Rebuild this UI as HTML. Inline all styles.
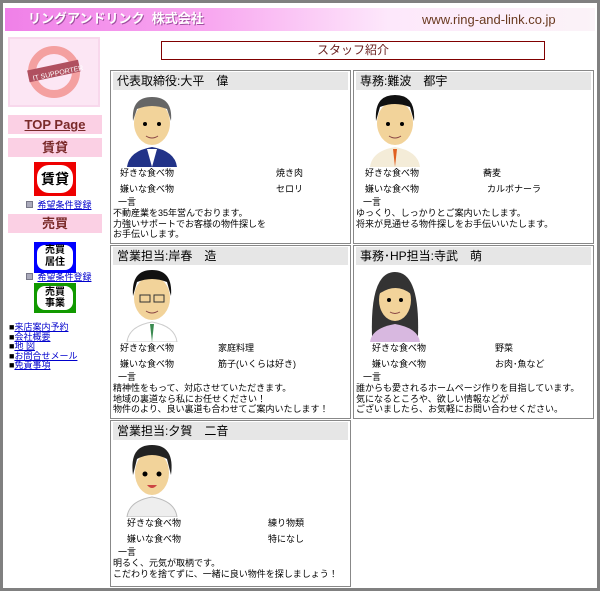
<!DOCTYPE html>
<html><head><meta charset="utf-8"><style>
*{margin:0;padding:0;box-sizing:border-box}
body{width:600px;height:591px;background:#fff;position:relative;overflow:hidden;font-family:"Liberation Sans","Noto Sans CJK JP",sans-serif;color:#000}
.a{position:absolute;white-space:nowrap}
#frame{position:absolute;left:0;top:0;width:600px;height:591px;border:3px solid #808080}
#hdr{left:5px;top:8px;width:590px;height:23px;background:linear-gradient(90deg,#f080e8 0%,#f8a8f0 35%,#fde8fb 65%,#fbf3f8 100%)}
.band{position:absolute;left:8px;width:94px;height:19px;background:#fbd0e4;color:#7a2a2a;font-weight:bold;text-align:center;font-size:13px;line-height:19px}
.card{position:absolute;border:1px solid #888;background:#fff;width:241px}
.card .h{position:absolute;left:2px;top:1px;right:2px;height:18px;background:#e6e6e6;font-size:12px;line-height:18px;padding-left:4px}
.s{font-size:9px;line-height:10px}
.t{font-size:9px;line-height:10.5px;left:2px}
.lk{color:#00c;text-decoration:underline;font-size:9px}
</style></head><body>
<div id="frame"></div>
<div class="a" id="hdr"></div>
<div class="a" style="left:28px;top:11px;font-size:13px;line-height:16px;color:#fff;font-weight:bold;text-shadow:1px 1px 0 #a050a0">リングアンドリンク&nbsp; 株式会社</div>
<div class="a" style="left:422px;top:12px;font-size:13px;line-height:16px;color:#6a3a20">www.ring-and-link.co.jp</div>

<div class="a" style="left:8px;top:37px;width:92px;height:70px;background:#fce6f4;border:2px solid #f8d8ec"></div>
<svg class="a" style="left:24px;top:45px" width="60" height="55"><circle cx="30" cy="27" r="22" fill="none" stroke="#f4a0a0" stroke-width="8"/><rect x="4" y="20" width="52" height="12" fill="#b05060" transform="rotate(-12 30 27)"/><text x="8" y="31" font-size="7" fill="#fff" transform="rotate(-12 30 27)" font-family="Liberation Sans">IT SUPPORTER</text></svg>

<div class="band" style="top:115px;text-decoration:underline">TOP Page</div>
<div class="band" style="top:138px">賃貸</div>
<div class="a" style="left:34px;top:162px;width:42px;height:34px;background:#e00;padding:3px"><div style="background:#fff;border-radius:12px;height:28px;text-align:center;font-weight:bold;font-size:14px;line-height:28px">賃貸</div></div>
<div class="a" style="left:26px;top:195px"><span style="display:inline-block;width:7px;height:7px;background:#aab;border:1px solid #778"></span> <span class="lk">希望条件登録</span></div>
<div class="band" style="top:214px">売買</div>
<div class="a" style="left:34px;top:242px;width:42px;height:31px;background:#00f;padding:3px"><div style="background:#fff;border-radius:8px;height:25px;text-align:center;font-weight:bold;font-size:10px;line-height:12px;padding-top:0px">売買<br>居住</div></div>
<div class="a" style="left:26px;top:271px;line-height:10px"><span style="display:inline-block;width:7px;height:7px;background:#aab;border:1px solid #778"></span> <span class="lk">希望条件登録</span></div>
<div class="a" style="left:34px;top:283px;width:42px;height:30px;background:#190;padding:3px"><div style="background:#fff;border-radius:8px;height:24px;text-align:center;font-weight:bold;font-size:10px;line-height:11px;padding-top:1px">売買<br>事業</div></div>
<div class="a" style="left:9px;top:323px;font-size:9px;line-height:9.5px">■<span class="lk">来店案内予約</span><br>■<span class="lk">会社概要</span><br>■<span class="lk">地 図</span><br>■<span class="lk">お問合せメール</span><br>■<span class="lk">免責事項</span></div>

<div class="a" style="left:161px;top:41px;width:384px;height:19px;border:1px solid #800000;text-align:center;font-size:12px;line-height:17px;color:#6a2020">スタッフ紹介</div>

<!-- card 1 -->
<div class="card" style="left:110px;top:70px;height:174px">
<div class="h">代表取締役:大平　偉</div>
<svg class="a" style="left:12px;top:20px" width="58" height="76"><path d="M4 76 Q6 60 29 56 Q52 60 54 76Z" fill="#223388"/><path d="M24 58 L29 76 L34 58Z" fill="#fff"/><ellipse cx="29" cy="32" rx="18" ry="22" fill="#f2d39a"/><path d="M10 30 Q8 6 29 6 Q50 6 48 30 L44 18 Q29 12 14 18Z" fill="#666"/><circle cx="22" cy="33" r="2"/><circle cx="36" cy="33" r="2"/><path d="M23 45 Q29 49 35 45" stroke="#844" fill="none"/></svg>
<div class="a s" style="left:9px;top:97px">好きな食べ物</div><div class="a s" style="left:165px;top:97px">焼き肉</div>
<div class="a s" style="left:9px;top:113px">嫌いな食べ物</div><div class="a s" style="left:165px;top:113px">セロリ</div>
<div class="a s" style="left:7px;top:126px">一言</div>
<div class="a t" style="top:137px">不動産業を35年営んでおります。<br>力強いサポートでお客様の物件探しを<br>お手伝いします。</div>
</div>
<!-- card 2 -->
<div class="card" style="left:353px;top:70px;height:174px">
<div class="h">専務:難波　都宇</div>
<svg class="a" style="left:12px;top:20px" width="58" height="76"><path d="M4 76 Q6 60 29 56 Q52 60 54 76Z" fill="#f4ecd8"/><path d="M27 58 L29 76 L31 58Z" fill="#e06020"/><ellipse cx="29" cy="32" rx="18" ry="22" fill="#f2d39a"/><path d="M10 30 Q8 4 29 4 Q50 4 48 30 L44 16 Q29 10 14 16Z" fill="#111"/><circle cx="22" cy="33" r="2"/><circle cx="36" cy="33" r="2"/><path d="M23 45 Q29 49 35 45" stroke="#844" fill="none"/></svg>
<div class="a s" style="left:11px;top:97px">好きな食べ物</div><div class="a s" style="left:129px;top:97px">蕎麦</div>
<div class="a s" style="left:11px;top:113px">嫌いな食べ物</div><div class="a s" style="left:133px;top:113px">カルボナーラ</div>
<div class="a s" style="left:9px;top:126px">一言</div>
<div class="a t" style="top:137px">ゆっくり、しっかりとご案内いたします。<br>将来が見通せる物件探しをお手伝いいたします。</div>
</div>
<!-- card 3 -->
<div class="card" style="left:110px;top:245px;height:174px">
<div class="h">営業担当:岸春　造</div>
<svg class="a" style="left:12px;top:20px" width="58" height="76"><path d="M4 76 Q6 60 29 56 Q52 60 54 76Z" fill="#fff" stroke="#ccc"/><path d="M27 58 L29 76 L31 58Z" fill="#3a8a50"/><ellipse cx="29" cy="32" rx="18" ry="22" fill="#f2d39a"/><path d="M10 30 Q8 4 29 4 Q50 4 48 30 L44 16 Q29 10 14 16Z" fill="#111"/><rect x="17" y="29" width="10" height="7" fill="none" stroke="#333"/><rect x="31" y="29" width="10" height="7" fill="none" stroke="#333"/><path d="M23 45 Q29 49 35 45" stroke="#844" fill="none"/></svg>
<div class="a s" style="left:9px;top:97px">好きな食べ物</div><div class="a s" style="left:107px;top:97px">家庭料理</div>
<div class="a s" style="left:9px;top:113px">嫌いな食べ物</div><div class="a s" style="left:107px;top:113px">筋子(いくらは好き)</div>
<div class="a s" style="left:7px;top:126px">一言</div>
<div class="a t" style="top:137px">精神性をもって、対応させていただきます。<br>地域の裏道なら私にお任せください！<br>物件のより、良い裏道も合わせてご案内いたします！</div>
</div>
<!-- card 4 -->
<div class="card" style="left:353px;top:245px;height:174px">
<div class="h">事務･HP担当:寺武　萌</div>
<svg class="a" style="left:12px;top:20px" width="58" height="76"><path d="M6 70 Q4 6 29 6 Q54 6 52 70Z" fill="#333"/><path d="M4 76 Q6 62 29 58 Q52 62 54 76Z" fill="#d8b8e0"/><ellipse cx="29" cy="34" rx="16" ry="21" fill="#f2d39a"/><path d="M13 28 Q18 10 29 10 Q42 10 45 28 Q30 16 13 28Z" fill="#333"/><circle cx="23" cy="34" r="2"/><circle cx="35" cy="34" r="2"/><path d="M24 46 Q29 49 34 46" stroke="#844" fill="none"/></svg>
<div class="a s" style="left:18px;top:97px">好きな食べ物</div><div class="a s" style="left:141px;top:97px">野菜</div>
<div class="a s" style="left:18px;top:113px">嫌いな食べ物</div><div class="a s" style="left:141px;top:113px">お肉･魚など</div>
<div class="a s" style="left:9px;top:126px">一言</div>
<div class="a t" style="top:137px">誰からも愛されるホームページ作りを目指しています。<br>気になるところや、欲しい情報などが<br>ございましたら、お気軽にお問い合わせください。</div>
</div>
<!-- card 5 -->
<div class="card" style="left:110px;top:420px;height:167px">
<div class="h">営業担当:夕賀　二音</div>
<svg class="a" style="left:12px;top:20px" width="58" height="76"><path d="M4 76 Q6 60 29 56 Q52 60 54 76Z" fill="#eee" stroke="#bbb"/><ellipse cx="29" cy="32" rx="17" ry="22" fill="#f2d39a"/><path d="M10 34 Q6 4 29 4 Q52 4 48 34 L44 18 Q29 10 14 18Z" fill="#222"/><circle cx="22" cy="33" r="2.5"/><circle cx="36" cy="33" r="2.5"/><path d="M24 44 Q29 50 34 44Z" fill="#c44"/></svg>
<div class="a s" style="left:16px;top:97px">好きな食べ物</div><div class="a s" style="left:157px;top:97px">練り物類</div>
<div class="a s" style="left:16px;top:113px">嫌いな食べ物</div><div class="a s" style="left:157px;top:113px">特になし</div>
<div class="a s" style="left:7px;top:126px">一言</div>
<div class="a t" style="top:137px">明るく、元気が取柄です。<br>こだわりを捨てずに、一緒に良い物件を探しましょう！</div>
</div>
</body></html>
